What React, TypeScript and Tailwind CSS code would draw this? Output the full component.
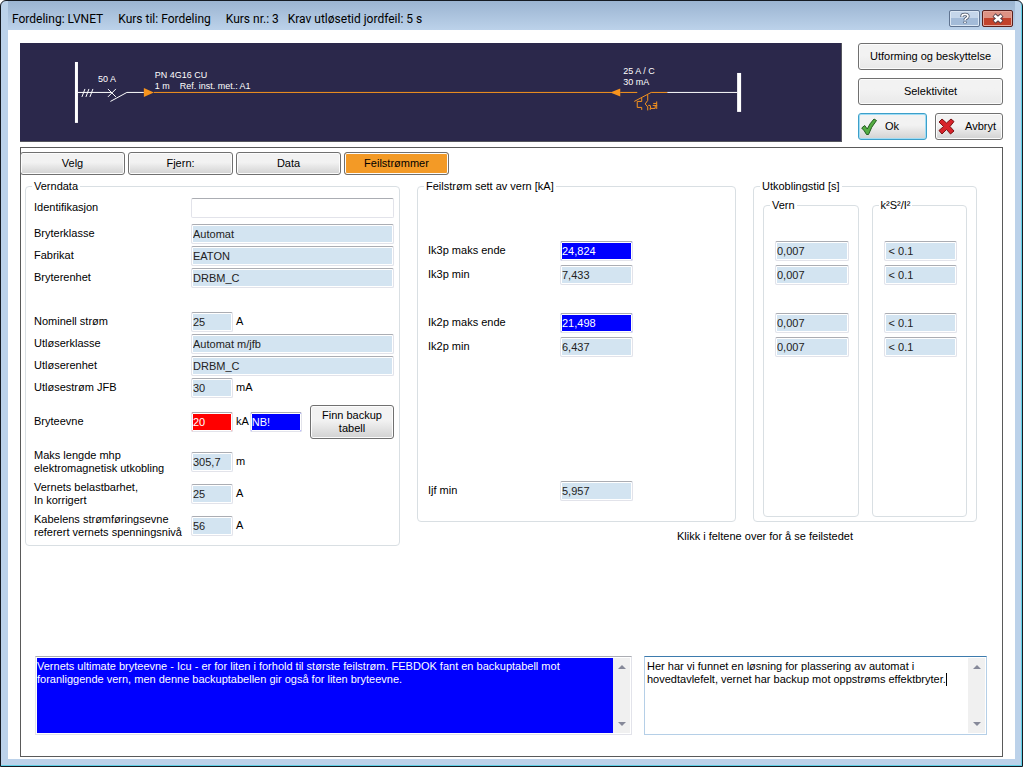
import { useId, type ReactNode } from "react";

type Tone = "info" | "alert" | "note" | "plain";

const tones: Record<Tone, string> = {
  info: "bg-[#d3e4f1] text-[#222]",
  alert: "bg-[#ff0000] text-white",
  note: "bg-[#0000ff] text-white",
  plain: "bg-white text-black",
};

const fieldBase =
  "h-5 min-w-0 rounded-xs border border-[#e2e3ea] border-t-[#abadb3] px-px shadow-[inset_0_0_0_1px_white] outline-none";

const buttonBase =
  "rounded-[3px] border border-[#707070] bg-gradient-to-b from-[#f2f2f2] from-45% shadow-[inset_0_0_0_1px_#fcfcfc]";

function Field({
  label,
  value,
  unit,
  tone = "info",
  labelWidth = "w-[157px]",
  width,
  children,
}: {
  label: ReactNode;
  value: string;
  unit?: string;
  tone?: Tone;
  labelWidth?: string;
  width?: string;
  children?: ReactNode;
}) {
  const id = useId();
  return (
    <div className="flex items-center">
      <label htmlFor={id} className={`${labelWidth} shrink-0 whitespace-nowrap`}>
        {label}
      </label>
      <input
        id={id}
        defaultValue={value}
        className={`${fieldBase} ${tones[tone]} ${width ?? "flex-1"}`}
      />
      {unit && <span className="pl-[3px]">{unit}</span>}
      {children}
    </div>
  );
}

function Group({ title, children }: { title: string; children: ReactNode }) {
  return (
    <fieldset className="min-w-0 rounded-[4px] border border-[#d9dfe3]">
      <legend className="ml-1.5 px-0.5">{title}</legend>
      {children}
    </fieldset>
  );
}

function TimeColumn({ title, value }: { title: string; value: string }) {
  const cell = (name: string) => (
    <input
      aria-label={`${title} ${name}`}
      defaultValue={value}
      className={`${fieldBase} ${tones.info} w-full`}
    />
  );
  return (
    <Group title={title}>
      <div className="flex flex-col gap-1 pt-[29px] pr-[9px] pb-[159px] pl-[11px]">
        {cell("Ik3p maks ende")}
        {cell("Ik3p min")}
        <div className="h-5" />
        {cell("Ik2p maks ende")}
        {cell("Ik2p min")}
      </div>
    </Group>
  );
}

function ScrollBar() {
  return (
    <div className="flex w-[17px] shrink-0 flex-col items-center justify-between bg-[#f0f0f0] py-[7px]">
      <svg width="8" height="4" viewBox="0 0 8 4">
        <path d="M4 0L8 4H0z" fill="#868999" />
      </svg>
      <svg width="8" height="4" viewBox="0 0 8 4">
        <path d="M4 4L0 0h8z" fill="#868999" />
      </svg>
    </div>
  );
}

function Diagram() {
  return (
    <svg viewBox="0 0 822 98" className="block w-full" fontFamily="'Liberation Sans', Arial, sans-serif" fontSize="9">
      <g fill="#fff">
        <rect x="55" y="19" width="3" height="61" />
        <rect x="718" y="30" width="4" height="39" />
        <text x="78" y="39">50 A</text>
        <text x="135" y="35">PN 4G16 CU</text>
        <text x="135" y="46">1 m</text>
        <text x="160" y="46">Ref. inst. met.: A1</text>
        <text x="604" y="31">25 A / C</text>
        <text x="604" y="42">30 mA</text>
      </g>
      <g stroke="#fff" fill="none">
        <path d="M58 49.500H92M107 49.500H124M648 49.500H718" />
        <path d="M62 54l3-8M66 54l3-8M70 54l3-8M88 46l8 8M96 46l-8 8M90.500 58.500L107 49.500" />
      </g>
      <g stroke="#f7941d" fill="none">
        <path d="M134 49.500H592M601 49.500H618M632 49.500H648M615 58.500L632 49.500" />
        <path d="M622.500 55v3.500h-4.500v6h4.500v2.500M628.500 52v5.500l-2.500 3.500 2.500 3v3.500M629 62.500h2l.5 3h4.500v-3M631 65v2M637.500 66v-3.500h-4M637.500 63v-4.500M634 60.500h3.500" />
      </g>
      <path d="M124 45l10 4.500-10 4.500zM601 45.500l-10 4 10 4z" fill="#f7941d" />
    </svg>
  );
}

function TitleBar() {
  return (
    <header className="flex h-[29px] items-start justify-between bg-gradient-to-b from-[#9bb4d1] to-[#bcd2ea] pr-[2px] pl-1">
      <h1 className="flex gap-[15px] pt-[10px] font-[Roboto,sans-serif] text-[12px] leading-4 whitespace-pre text-black">
        <span>Fordeling: LVNET</span>
        <span>Kurs til: Fordeling</span>
        <span>{"Kurs nr.: 3   Krav utløsetid jordfeil: 5 s"}</span>
      </h1>
      <div className="flex gap-[2px] pt-[9px]">
        <button
          aria-label="Hjelp"
          className="flex h-[17px] w-[31px] items-center justify-center rounded-xs border border-[#5f7390] bg-gradient-to-b from-[#c5d6ea] from-50% to-[#a3bbd8] to-50% shadow-[inset_0_0_0_1px_#dbe7f4]"
        >
          <svg width="10" height="13" viewBox="0 0 10 13" fill="none">
            <path d="M2 5V4Q2 2.300 5 2.300t3 2q0 1.300-1.500 2T5 8.300M5 9.500V11.300" stroke="#4b5567" strokeWidth="3.200" />
            <path d="M2 4.700V4Q2 2.300 5 2.300t3 2q0 1.300-1.500 2T5 8.200M5 9.700V11" stroke="#fff" strokeWidth="1.700" />
          </svg>
        </button>
        <button
          aria-label="Lukk"
          className="flex h-[17px] w-[31px] items-center justify-center rounded-xs border border-[#5a1f1c] bg-gradient-to-b from-[#dd9284] from-50% to-[#c2422c] to-50% shadow-[inset_0_0_0_1px_#e5a79c]"
        >
          <svg width="12" height="11" viewBox="0 0 12 11" fill="none">
            <path d="M2 2l8 7M10 2L2 9" stroke="#55404a" strokeWidth="4.500" />
            <path d="M2.500 2.500l7 6M9.500 2.500l-7 6" stroke="#fff" strokeWidth="2.600" />
          </svg>
        </button>
      </div>
    </header>
  );
}

export default function App() {
  return (
    <div className="flex min-h-screen flex-col rounded-t-md border border-[#151a22] bg-[#bcd2ea] px-[7px] pb-[7px] font-['Liberation_Sans',Arial,sans-serif] text-[11px] leading-[13px] text-black shadow-[inset_-1px_-1px_0_#5fd0e6]">
      <TitleBar />
      <main className="flex flex-1 flex-col bg-white px-3 pt-[13px] pb-[2px]">
        <div className="flex gap-4">
          <div className="min-w-0 flex-1 self-start border-r border-b border-[#55565f] bg-[#2b284b]">
            <Diagram />
          </div>
          <div className="flex w-[145px] flex-col gap-2">
            <button className={`${buttonBase} h-[27px] to-[#e9e9e9]`}>Utforming og beskyttelse</button>
            <button className={`${buttonBase} h-[27px] to-[#e9e9e9]`}>Selektivitet</button>
            <div className="grid grid-cols-2 gap-2">
              <button className="flex h-[27px] items-center gap-2 rounded-[3px] border border-[#3c9fc9] bg-gradient-to-b from-[#f2f2f2] from-45% to-[#d2d2d2] pl-[2px] shadow-[inset_0_0_0_1px_#9fdcf5]">
                <svg width="16" height="18" viewBox="0 0 16 18">
                  <path d="M.7 10l3-2.500 2.500 3.500Q9 5 13 1l2.500 1.500Q10 9 7.500 16.500H5.500Q3.500 12.500.7 10z" fill="#55ad42" stroke="#245c20" />
                </svg>
                Ok
              </button>
              <button className={`${buttonBase} flex h-[27px] items-center justify-between to-[#d2d2d2] pr-[6px] pl-[2px]`}>
                <svg width="17" height="17" viewBox="0 0 17 17">
                  <path d="M1 4l3-3 4.500 4L13 1l3 2.500-4 5 4 4.500-3.500 3-4-4.500L4 16l-3-3.500 4.500-4z" fill="#d8232a" stroke="#7a1214" />
                </svg>
                Avbryt
              </button>
            </div>
          </div>
        </div>

        <section className="mt-[5px] flex flex-1 flex-col border border-[#5a5a5a] pt-1">
          <nav className="-ml-px flex gap-[3px]">
            <button className={`${buttonBase} h-[23px] w-[105px] to-[#d2d2d2]`}>Velg</button>
            <button className={`${buttonBase} h-[23px] w-[105px] to-[#d2d2d2]`}>Fjern:</button>
            <button className={`${buttonBase} h-[23px] w-[105px] to-[#d2d2d2]`}>Data</button>
            <button className="h-[23px] w-[105px] rounded-[3px] border border-[#707070] bg-[#f39a26] shadow-[inset_0_0_0_1px_#fcfcfc]">
              Feilstrømmer
            </button>
          </nav>

          <div className="mt-[5px] grid grid-cols-[375fr_560fr] items-start gap-[17px] pr-[25px] pl-1">
            <Group title="Verndata">
              <div className="flex flex-col pt-[5px] pr-[5px] pb-[6px] pl-2">
                <Field label="Identifikasjon" value="" tone="plain" />
                <div className="mt-[6px] flex flex-col gap-[2px]">
                  <Field label="Bryterklasse" value="Automat" />
                  <Field label="Fabrikat" value="EATON" />
                  <Field label="Bryterenhet" value="DRBM_C" />
                </div>
                <div className="mt-6 flex flex-col gap-[2px]">
                  <Field label="Nominell strøm" value="25" unit="A" width="w-[42px]" />
                  <Field label="Utløserklasse" value="Automat m/jfb" />
                  <Field label="Utløserenhet" value="DRBM_C" />
                  <Field label="Utløsestrøm JFB" value="30" unit="mA" width="w-[42px]" />
                </div>
                <div className="mt-[7px]">
                  <Field label="Bryteevne" value="20" unit="kA" tone="alert" width="w-[42px]">
                    <input
                      aria-label="Merknad bryteevne"
                      defaultValue="NB!"
                      className={`${fieldBase} ${tones.note} ml-px w-[52px]`}
                    />
                    <button className={`${buttonBase} ml-auto h-[34px] w-[84px] to-[#d2d2d2]`}>
                      Finn backup
                      <br />
                      tabell
                    </button>
                  </Field>
                </div>
                <div className="mt-[10px] flex flex-col gap-[6px]">
                  <Field
                    label={<>Maks lengde mhp<br />elektromagnetisk utkobling</>}
                    value="305,7"
                    unit="m"
                    width="w-[42px]"
                  />
                  <Field label={<>Vernets belastbarhet,<br />In korrigert</>} value="25" unit="A" width="w-[42px]" />
                  <Field
                    label={<>Kabelens strømføringsevne<br />referert vernets spenningsnivå</>}
                    value="56"
                    unit="A"
                    width="w-[42px]"
                  />
                </div>
              </div>
            </Group>

            <div>
              <div className="grid grid-cols-[319fr_224fr] gap-[17px]">
                <Group title="Feilstrøm sett av vern [kA]">
                  <div className="flex flex-col gap-1 pt-12 pb-5 pl-[10px]">
                    <Field label="Ik3p maks ende" value="24,824" tone="note" labelWidth="w-[132px]" width="w-[73px]" />
                    <Field label="Ik3p min" value="7,433" labelWidth="w-[132px]" width="w-[73px]" />
                    <div className="h-5" />
                    <Field label="Ik2p maks ende" value="21,498" tone="note" labelWidth="w-[132px]" width="w-[73px]" />
                    <Field label="Ik2p min" value="6,437" labelWidth="w-[132px]" width="w-[73px]" />
                    <div className="h-[116px]" />
                    <Field label="Ijf min" value="5,957" labelWidth="w-[132px]" width="w-[73px]" />
                  </div>
                </Group>
                <Group title="Utkoblingstid [s]">
                  <div className="grid grid-cols-2 gap-[13px] px-[9px] pt-[6px] pb-1">
                    <TimeColumn title="Vern" value="0,007" />
                    <TimeColumn title="k²S²/I²" value=" < 0.1" />
                  </div>
                </Group>
              </div>
              <p className="mt-2 pr-[124px] text-right">Klikk i feltene over for å se feilstedet</p>
            </div>
          </div>

          <div className="mt-auto grid grid-cols-[597fr_343fr] gap-3 pt-4 pr-[15px] pb-[21px] pl-[14px]">
            <div className="flex h-[79px] border border-[#e2e3ea] border-t-[#abadb3] p-px">
              <textarea
                aria-label="Melding"
                readOnly
                className="min-w-0 flex-1 resize-none overflow-hidden bg-[#0000ff] pt-[2px] text-white outline-none"
                defaultValue="Vernets ultimate bryteevne - Icu - er for liten i forhold til største feilstrøm. FEBDOK fant en backuptabell mot foranliggende vern, men denne backuptabellen gir også for liten bryteevne."
              />
              <ScrollBar />
            </div>
            <div className="relative flex h-[79px] border border-[#b5cfe7] border-t-[#3d7bad] p-px">
              <textarea
                aria-label="Kommentar"
                className="min-w-0 flex-1 resize-none overflow-hidden bg-white px-px pt-[2px] outline-none"
                defaultValue={"Her har vi funnet en løsning for plassering av automat i\nhovedtavlefelt, vernet har backup mot oppstrøms effektbryter."}
              />
              <span className="absolute top-4 left-[301px] h-[13px] w-px bg-black" />
              <ScrollBar />
            </div>
          </div>
        </section>
      </main>
    </div>
  );
}
